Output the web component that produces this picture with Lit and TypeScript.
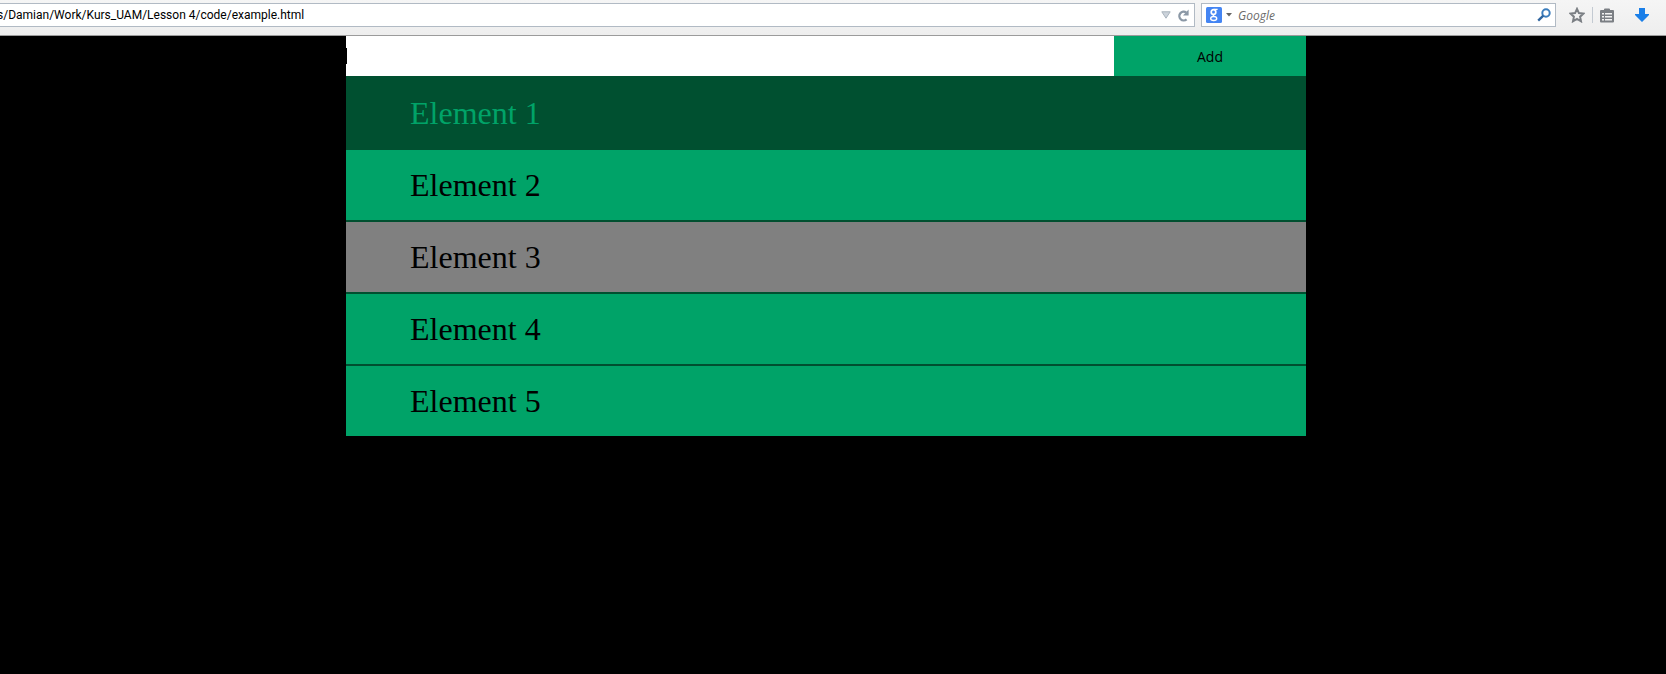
import { LitElement, html, css } from "lit";
import { customElement, state } from "lit/decorators.js";

interface Entry {
  label: string;
  mode: "normal" | "active" | "muted";
}

@customElement("browser-bar")
export class BrowserBar extends LitElement {
  static styles = css`
    :host {
      display: block;
      font-family: "Open Sans", "Noto Sans", sans-serif;
      font-size: 12px;
    }
    .bar {
      display: flex;
      align-items: flex-start;
      box-sizing: border-box;
      height: 36px;
      padding: 3px 16px 0 0;
      background: linear-gradient(#f5f5f5, #eeeeee);
      border-bottom: 1px solid #9b9b9b;
    }
    .field {
      display: flex;
      align-items: center;
      box-sizing: border-box;
      height: 24px;
      background: #fff;
      border: 1px solid #b1bac4;
    }
    .location {
      flex: 1;
      min-width: 0;
      border-left: 0;
      padding-right: 4px;
      margin-right: 6px;
    }
    .search {
      width: 355px;
      padding: 0 4px;
    }
    input {
      flex: 1;
      min-width: 0;
      height: 22px;
      padding: 0;
      border: 0;
      outline: 0;
      background: none;
      font: inherit;
      color: #000;
    }
    .url {
      font-family: Roboto, "Open Sans", sans-serif;
      text-indent: -3px;
    }
    .query {
      padding-left: 3px;
      font-style: italic;
    }
    .query::placeholder {
      color: #6b6b6b;
      opacity: 1;
    }
    button {
      display: flex;
      padding: 0;
      border: 0;
      background: none;
    }
    svg {
      display: block;
    }
    .reload {
      margin-left: 6px;
    }
    .tools {
      display: flex;
      align-items: center;
      height: 24px;
      padding-left: 13px;
    }
    .divider {
      width: 1px;
      height: 16px;
      margin: 0 7px;
      background: #c3cad2;
    }
    .download {
      margin-left: 20px;
    }
  `;

  render() {
    return html`
      <header class="bar">
        <div class="field location">
          <input class="url" type="text" aria-label="Address" spellcheck="false"
            value="s/Damian/Work/Kurs_UAM/Lesson 4/code/example.html" />
          <button aria-label="History">
            <svg width="10" height="8" viewBox="0 0 10 8"><path d="M.8.8h8.4L5 7.2z" fill="#ccd3db" stroke="#a9b3bd" stroke-width="1" /></svg>
          </button>
          <button class="reload" aria-label="Reload">
            <svg width="13" height="13" viewBox="0 0 13 13"><path d="M9.6 10.4A4.4 4.4 0 1 1 9.2 3.4" fill="none" stroke="#8b98a6" stroke-width="2.3" /><path d="M11.6.6v5.9H6z" fill="#8b98a6" /></svg>
          </button>
        </div>
        <div class="field search">
          <svg width="16" height="16" viewBox="0 0 16 16"><rect width="16" height="16" rx="1.5" fill="#4485f3" /><g fill="none" stroke="#fff"><ellipse cx="7.5" cy="5" rx="2.3" ry="2.4" stroke-width="1.7" /><path d="M8 2.4h3.6M8.4 7.2c-1.8.9-1.4 1.5-.2 2.2" stroke-width="1.2" /><ellipse cx="7.7" cy="11.5" rx="3" ry="2" stroke-width="1.4" /></g></svg>
          <button aria-label="Choose search engine">
            <svg width="13" height="4" viewBox="0 0 13 4"><path d="M4 0h6L7 3.6z" fill="#666" /></svg>
          </button>
          <input class="query" type="text" aria-label="Search" placeholder="Google" />
          <button aria-label="Search">
            <svg width="14" height="14" viewBox="0 0 14 14"><circle cx="9" cy="5" r="3.7" fill="none" stroke="#3b7dbd" stroke-width="2" /><path d="M6.3 7.7 1.2 12.6" stroke="#2f659f" stroke-width="2.4" /></svg>
          </button>
        </div>
        <nav class="tools" aria-label="Tools">
          <button aria-label="Bookmark">
            <svg width="16" height="16" viewBox="0 0 16 16"><path d="M8 1.9l1.9 4.2 4.6.5-3.4 3.1.9 4.6-4-2.3-4 2.3.9-4.6-3.4-3.1 4.6-.5z" fill="none" stroke="#7b7f84" stroke-width="2" /></svg>
          </button>
          <span class="divider"></span>
          <button aria-label="Bookmarks list">
            <svg width="14" height="15" viewBox="0 0 14 15"><path d="M4 2V1.5Q4 .5 5 .5h4q1 0 1 1V2h3q1 0 1 1v10.5q0 1-1 1H1q-1 0-1-1V3q0-1 1-1z" fill="#7b7f84" /><path d="M2 5h2v1.6H2zM5 5h7v1.6H5zM2 8h2v1.6H2zM5 8h7v1.6H5zM2 11h2v1.6H2zM5 11h7v1.6H5z" fill="#f3f3f3" /></svg>
          </button>
          <button class="download" aria-label="Downloads">
            <svg width="16" height="16" viewBox="0 0 16 16"><path d="M5 1h6v6h4v1l-7 7-7-7V7h4z" fill="#1a7fe8" /></svg>
          </button>
        </nav>
      </header>
    `;
  }
}

@customElement("app-root")
export class AppRoot extends LitElement {
  static styles = css`
    :host {
      display: block;
      min-height: 100vh;
      background: #000;
    }
    .viewport {
      padding-right: 14px;
    }
    .page {
      width: 960px;
      max-width: 100%;
      margin: 0 auto;
    }
    .form {
      display: flex;
    }
    .entry {
      position: relative;
      flex: 4;
      display: flex;
      height: 40px;
      background: #fff;
    }
    .text {
      width: 100%;
      padding: 0;
      border: 0;
      outline: 0;
      font: 14px "Open Sans", sans-serif;
    }
    .caret {
      position: absolute;
      left: 0;
      top: 12px;
      width: 1px;
      height: 16px;
      background: #000;
    }
    .add {
      flex: 1;
      padding: 0;
      border: 0;
      background: #00a368;
      color: #000;
      font: 14px "Open Sans", "Noto Sans", sans-serif;
    }
    .list {
      margin: 0;
      padding: 0;
      list-style: none;
      font-family: "Liberation Serif", "Times New Roman", serif;
      font-size: 32px;
      line-height: 36px;
    }
    .item {
      padding: 17px 64px;
      border-top: 2px solid #005030;
      background: #00a368;
      color: #000;
    }
    .active {
      background: #005030;
      color: #00a368;
    }
    .muted {
      background: #808080;
    }
  `;

  @state() private entries: Entry[] = [
    { label: "Element 1", mode: "active" },
    { label: "Element 2", mode: "normal" },
    { label: "Element 3", mode: "muted" },
    { label: "Element 4", mode: "normal" },
    { label: "Element 5", mode: "normal" },
  ];

  private add(event: Event) {
    event.preventDefault();
    const input = this.renderRoot.querySelector<HTMLInputElement>(".text")!;
    if (!input.value) return;
    this.entries = [...this.entries, { label: input.value, mode: "normal" }];
    input.value = "";
  }

  render() {
    return html`
      <browser-bar></browser-bar>
      <div class="viewport">
        <main class="page">
          <form class="form" @submit=${this.add}>
            <div class="entry">
              <input class="text" type="text" aria-label="New element" />
              <span class="caret"></span>
            </div>
            <button class="add" type="submit">Add</button>
          </form>
          <ul class="list">
            ${this.entries.map((entry) => html`<li class="item ${entry.mode}">${entry.label}</li>`)}
          </ul>
        </main>
      </div>
    `;
  }
}
